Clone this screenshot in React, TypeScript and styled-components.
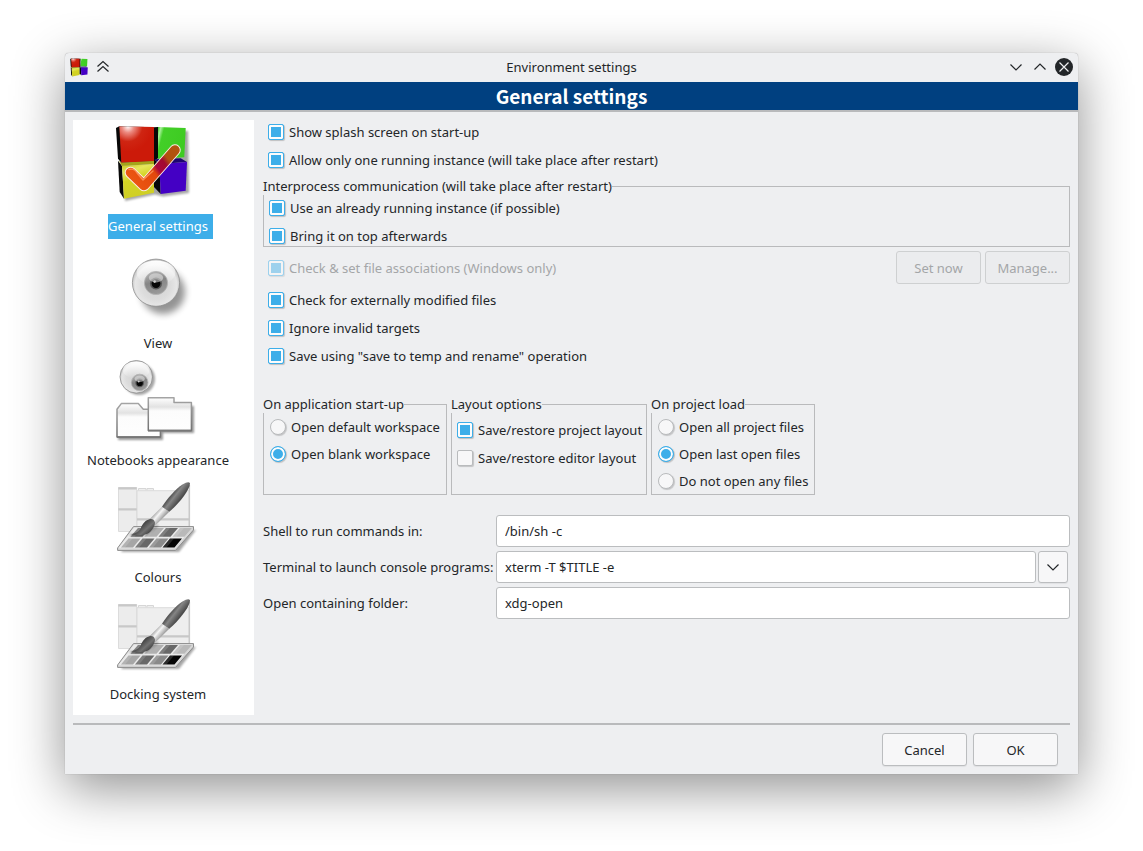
import React, { useState } from "react";
import styled, { createGlobalStyle } from "styled-components";

const GlobalStyle = createGlobalStyle`
  *, *::before, *::after { box-sizing: border-box; }
  body { margin: 0; background: #fff; }
  body, button, input {
    font-family: "Noto Sans", "Open Sans", sans-serif;
    font-size: 13px;
    line-height: 18px;
    color: #232629;
  }
`;

const Desktop = styled.main`
  padding: 53px 65px 76px;
`;

const Dialog = styled.section`
  background: #eeeff1;
  border-radius: 4px 4px 0 0;
  box-shadow: 0 0 1px rgba(0, 0, 0, 0.4), 0 14px 52px rgba(0, 0, 0, 0.44);
`;

const TitleBar = styled.header`
  display: grid;
  grid-template-columns: 1fr auto 1fr;
  align-items: center;
  height: 29px;
  padding: 0 5px 1px;
`;

const TitleTools = styled.div<{ $end?: boolean }>`
  display: flex;
  align-items: center;
  gap: 6px;
  justify-content: ${(p) => (p.$end ? "flex-end" : "flex-start")};
`;

const TitleButton = styled.button`
  display: flex;
  width: 18px;
  height: 18px;
  padding: 0;
  border: 0;
  background: none;
`;

const WindowTitle = styled.span`
  text-align: center;
`;

const Banner = styled.h1`
  height: 30px;
  margin: 0;
  background: #004080;
  border-bottom: 2px solid #b9babc;
  color: #fff;
  font-family: "Noto Sans CJK SC", "Noto Sans", sans-serif;
  font-size: 19px;
  font-weight: 700;
  line-height: 28px;
  text-align: center;
`;

const Body = styled.div`
  display: flex;
  gap: 9px;
  padding: 8px 8px 0;
`;

const Sidebar = styled.nav`
  flex: none;
  display: flex;
  flex-direction: column;
  width: 181px;
  padding: 2px 11px 8px 0;
  background: #fff;
`;

const PageButton = styled.button`
  display: flex;
  flex-direction: column;
  align-items: center;
  height: 117px;
  padding: 0;
  border: 0;
  background: none;
`;

const PageLabel = styled.span<{ $selected: boolean }>`
  padding: 0 5px 1px 0;
  margin-right: -5px;
  line-height: 24px;
  color: ${(p) => (p.$selected ? "#fff" : "#232629")};
  background: ${(p) => (p.$selected ? "#3daee9" : "none")};
`;

const Content = styled.div`
  flex: 1;
  min-width: 0;
  display: flex;
  flex-direction: column;
`;

const Stack = styled.div<{ $gap: number; $pad?: string }>`
  display: flex;
  flex-direction: column;
  gap: ${(p) => p.$gap}px;
  padding: ${(p) => p.$pad || "0"};
`;

const Option = styled.label<{ $disabled?: boolean }>`
  display: flex;
  align-items: center;
  gap: 5px;
  height: 20px;
  padding-left: 5px;
  white-space: nowrap;
  color: ${(p) => (p.$disabled ? "#a4a6a8" : "inherit")};
`;

const Mark = styled.input`
  appearance: none;
  flex: none;
  width: 16px;
  height: 16px;
  margin: 0;
  border: 1px solid #b9bbbd;
  border-radius: ${(p) => (p.type === "radio" ? "50%" : "2px")};
  background: #f7f7f8;
  box-shadow: 1px 1px 1px rgba(0, 0, 0, 0.18);

  &:checked {
    border-color: #3daee9;
    background: #3daee9;
    box-shadow: inset 0 0 0 2px #fcfcfc, 1px 1px 1px rgba(0, 0, 0, 0.2);
  }
  &:disabled {
    opacity: 0.45;
  }
`;

const AssociationRow = styled.div`
  display: flex;
  align-items: center;
  gap: 4px;
  margin: 4px 0 6px;

  label { flex: 1; }
`;

const PushButton = styled.button`
  width: 85px;
  height: 33px;
  padding: 0;
  border: 1px solid #bbbdbf;
  border-radius: 3px;
  background: #f7f7f8;
  box-shadow: 0 1px 1px rgba(0, 0, 0, 0.06);

  &:disabled {
    color: #a4a6a8;
    border-color: #ced0d1;
    background: #ebecee;
    box-shadow: none;
  }
`;

const Group = styled.fieldset<{ $width?: number }>`
  width: ${(p) => (p.$width ? `${p.$width}px` : "auto")};
  min-width: 0;
  margin: 0;
  padding: 0;
  border: 1px solid #b9babc;
`;

const Legend = styled.legend`
  height: 18px;
  margin-left: -1px;
  padding: 0;
  background: #eeeff1;
`;

const GroupRow = styled.div`
  display: flex;
  gap: 4px;
  margin-top: 29px;

  fieldset { height: 100px; }
`;

const Form = styled.div`
  display: grid;
  grid-template-columns: 229px 1fr;
  column-gap: 4px;
  row-gap: 4px;
  align-items: center;
  margin-top: 20px;
  white-space: nowrap;
`;

const TextField = styled.input`
  flex: 1;
  min-width: 0;
  width: 100%;
  height: 32px;
  padding: 0 8px;
  border: 1px solid #bbbdbf;
  border-radius: 3px;
  background: #fff;
`;

const Combo = styled.div`
  display: flex;
  gap: 2px;
  padding-right: 2px;
`;

const DropButton = styled(PushButton)`
  display: flex;
  align-items: center;
  justify-content: center;
  width: 30px;
  height: 32px;
`;

const Footer = styled.footer`
  display: flex;
  justify-content: flex-end;
  gap: 6px;
  margin: 8px 8px 0;
  padding: 8px 12px 8px 0;
  border-top: 2px solid #b9babc;
`;

const HiddenDefs = styled.svg`
  position: absolute;
  width: 0;
  height: 0;
`;

const SharedPaints = () => (
  <HiddenDefs aria-hidden="true">
    <defs>
      <radialGradient id="redFace" cx="0.25" cy="0" r="0.7">
        <stop offset="0" stopColor="#fff" />
        <stop offset="0.25" stopColor="#ec8a80" />
        <stop offset="0.6" stopColor="#cf2512" />
        <stop offset="1" stopColor="#cc1a09" />
      </radialGradient>
      <linearGradient id="greenFace" x1="0" y1="0" x2="1" y2="0.3">
        <stop offset="0" stopColor="#35c81e" />
        <stop offset="0.1" stopColor="#a8f09a" />
        <stop offset="0.22" stopColor="#43cf28" />
        <stop offset="1" stopColor="#3ecb22" />
      </linearGradient>
      <linearGradient id="yellowFace" x1="0" y1="0" x2="0.3" y2="1">
        <stop offset="0" stopColor="#c4c51c" />
        <stop offset="0.25" stopColor="#e6e65c" />
        <stop offset="0.5" stopColor="#d4d424" />
        <stop offset="1" stopColor="#cfcf26" />
      </linearGradient>
      <linearGradient id="tick" gradientUnits="userSpaceOnUse" x1="14" y1="64" x2="64" y2="26">
        <stop offset="0" stopColor="#ee5a14" />
        <stop offset="0.48" stopColor="#e2480c" />
        <stop offset="0.56" stopColor="#a8063c" />
        <stop offset="0.7" stopColor="#a30a30" />
        <stop offset="0.78" stopColor="#b2500f" />
        <stop offset="1" stopColor="#b2560f" />
      </linearGradient>
      <radialGradient id="ball" cx="0.5" cy="0.55" r="0.52">
        <stop offset="0" stopColor="#d2d2d2" />
        <stop offset="0.6" stopColor="#dcdcdc" />
        <stop offset="0.85" stopColor="#e6e6e6" />
        <stop offset="1" stopColor="#c2c2c2" />
      </radialGradient>
      <linearGradient id="shine" x1="0" y1="0" x2="0" y2="1">
        <stop offset="0" stopColor="#fff" />
        <stop offset="1" stopColor="#fff" stopOpacity="0" />
      </linearGradient>
      <linearGradient id="iris" x1="0.3" y1="0" x2="0.6" y2="1">
        <stop offset="0" stopColor="#b4b4b4" />
        <stop offset="0.45" stopColor="#858585" />
        <stop offset="1" stopColor="#9c9c9c" />
      </linearGradient>
      <linearGradient id="folder" x1="0" y1="0" x2="0" y2="1">
        <stop offset="0" stopColor="#fff" />
        <stop offset="0.28" stopColor="#e2e2e2" />
        <stop offset="0.4" stopColor="#fcfcfc" />
        <stop offset="1" stopColor="#fefefe" />
      </linearGradient>
      <linearGradient id="folderEdge" x1="0" y1="0" x2="0" y2="1">
        <stop offset="0" stopColor="#a4a4a4" />
        <stop offset="1" stopColor="#737373" />
      </linearGradient>
      <linearGradient id="handle" gradientUnits="userSpaceOnUse" x1="57" y1="21" x2="66" y2="28">
        <stop offset="0" stopColor="#3e3e3e" />
        <stop offset="0.45" stopColor="#858585" />
        <stop offset="1" stopColor="#4b4b4b" />
      </linearGradient>
      <linearGradient id="ferrule" gradientUnits="userSpaceOnUse" x1="42" y1="40" x2="49" y2="46">
        <stop offset="0" stopColor="#a8a8a8" />
        <stop offset="0.4" stopColor="#f6f6f6" />
        <stop offset="1" stopColor="#a0a0a0" />
      </linearGradient>
      <linearGradient id="bristle" gradientUnits="userSpaceOnUse" x1="30" y1="49" x2="40" y2="60">
        <stop offset="0" stopColor="#383838" />
        <stop offset="0.5" stopColor="#727272" />
        <stop offset="1" stopColor="#303030" />
      </linearGradient>
      <filter id="soft" x="-40%" y="-40%" width="180%" height="180%">
        <feGaussianBlur stdDeviation="3.5" />
      </filter>
      <filter id="softer" x="-40%" y="-40%" width="180%" height="180%">
        <feGaussianBlur stdDeviation="1.3" />
      </filter>
    </defs>
  </HiddenDefs>
);

const Cubes = () => (
  <>
    <path d="M3 6 6.3 4.3 41 5.3 45 5 45 36 41 39.3 8.3 40.7 5 36.7Z" fill="#080808" />
    <path d="M6.3 4.3 41 5 41 39.3 8.3 40.7Z" fill="url(#redFace)" />
    <path d="M45 5 72.7 6 71.3 35.3 45 36.7Z" fill="url(#greenFace)" />
    <path d="M5 38.7 9 44 11 76.7 6.7 70Z" fill="#080808" />
    <path d="M5.7 38.7 8.3 40.7 41 39 41 42 9 44Z" fill="#a4a51a" />
    <path d="M9 44 41 42 41 70.7 11 76.7Z" fill="url(#yellowFace)" />
    <path d="M41 37.3 67.7 36.3 74 40 46.3 42Z" fill="#1d0670" />
    <path d="M41 37.3 46.3 42 47.7 72 41 65Z" fill="#080808" />
    <path d="M46.3 42 74 40 72.7 68.7 47.7 72Z" fill="#4400c4" />
  </>
);

const Picture = ({ children }: { children: React.ReactNode }) => (
  <svg width="90" height="92" viewBox="0 0 90 92" aria-hidden="true">
    {children}
  </svg>
);

const GeneralIcon = () => (
  <Picture>
    <path d="M10 9 75 9 76 71 50 74.5 42 72.5 12 79Z" fill="#000" opacity="0.35" filter="url(#softer)" />
    <Cubes />
    <g fill="none" strokeLinecap="round" strokeLinejoin="round">
      <path d="M17.5 50.5 31 63.5 62 28" stroke="#fbeee6" strokeWidth="11.5" />
      <path d="M17.5 50.5 31 63.5 62 28" stroke="url(#tick)" strokeWidth="9.6" />
      <path d="M16 47.5Q21 46 24 51L30 58 40 49" stroke="#ff9a62" strokeWidth="1.4" opacity="0.8" />
    </g>
  </Picture>
);

type EyeProps = { cx: number; cy: number; r: number; ix: number; iy: number; ir: number };

const Eye = ({ cx, cy, r, ix, iy, ir }: EyeProps) => (
  <>
    <circle cx={cx} cy={cy} r={r} fill="url(#ball)" stroke="#8e8e8e" strokeWidth="0.8" />
    <ellipse cx={cx} cy={cy - r * 0.42} rx={r * 0.82} ry={r * 0.52} fill="url(#shine)" />
    <circle cx={ix} cy={iy} r={ir} fill="url(#iris)" stroke="#b3b3b3" strokeWidth="0.8" />
    <circle cx={ix} cy={iy + ir * 0.05} r={ir * 0.52} fill="#555" />
    <circle cx={ix} cy={iy + ir * 0.05} r={ir * 0.38} fill="#060606" />
    <ellipse cx={ix} cy={iy - ir * 0.45} rx={ir * 0.62} ry={ir * 0.4} fill="#e6e6e6" opacity="0.55" />
    <circle cx={ix - ir * 0.12} cy={iy - ir * 0.12} r={ir * 0.11} fill="#ccc" />
  </>
);

const ViewIcon = () => (
  <Picture>
    <circle cx="50" cy="53" r="22" fill="#000" opacity="0.42" filter="url(#soft)" />
    <Eye cx={43} cy={43.7} r={23.6} ix={43} iy={44} ir={11.6} />
  </Picture>
);

const NotebooksIcon = () => (
  <Picture>
    <circle cx="26" cy="23" r="16" fill="#000" opacity="0.35" filter="url(#softer)" />
    <Eye cx={23.3} cy={20.8} r={16.3} ix={26.7} iy={26.5} ir={8.3} />
    <path d="M5 84H50V77H81V50H60L40 55 6 58Z" fill="#000" opacity="0.4" filter="url(#softer)" />
    <path
      d="M4 53.3 8.3 47.6H25.3L30.3 53.3H47.4V81H4Z"
      fill="url(#folder)"
      stroke="url(#folderEdge)"
      strokeWidth="1.5"
      strokeLinejoin="round"
    />
    <path
      d="M35.3 41.7H61V46.6H78.4V74.6H35.3Z"
      fill="url(#folder)"
      stroke="url(#folderEdge)"
      strokeWidth="1.5"
      strokeLinejoin="round"
    />
    <path d="M4 81H47.5M35 74.6H78.5" stroke="#777" strokeWidth="1.6" />
  </Picture>
);

const swatches = [
  { x: 25, y: 55, fill: "#6f6f6f" },
  { x: 39, y: 55, fill: "#b0b0b0" },
  { x: 53, y: 55, fill: "#686868" },
  { x: 67, y: 55, fill: "#b9b9b9" },
  { x: 15.5, y: 65.6, fill: "#a6a6a6" },
  { x: 29.5, y: 65.6, fill: "#686868" },
  { x: 43.5, y: 65.6, fill: "#8a8a8a" },
  { x: 57, y: 65.6, fill: "#050505" },
];

const PaintIcon = () => (
  <Picture>
    <path d="M5.5 14.5H23.7V58.5H5.5Z" fill="#ececec" stroke="#dcdcdc" />
    <path d="M25.5 17.5V15.5H33V17.5M34 17.5V15.5H40.5V17.5" fill="#eee" stroke="#d6d6d6" />
    <path d="M24 17.7H76V54H24Z" fill="#eeeeee" stroke="#dadada" />
    <path d="M5.3 15.3H23.7M5.3 36.3H23.7M24 46.3H76" stroke="#c8c8c8" strokeWidth="2.2" />
    <path d="M76.4 12V53" stroke="#c9c9c9" strokeWidth="1.4" />
    <path d="M22 57H83L66 79H8Z" fill="#000" opacity="0.35" filter="url(#softer)" />
    <path
      d="M20.5 53.6H80.5V57L62.5 77.4H4.6V75Z"
      fill="#d6d6d6"
      stroke="#8c8c8c"
      strokeWidth="1"
      strokeLinejoin="round"
    />
    <path d="M21 54.4H79.4L62 75.2H5.4Z" fill="#eaeaea" />
    {swatches.map((s) => (
      <g key={`${s.x}-${s.y}`}>
        <path d={`M${s.x} ${s.y}h12l-7.5 8.8h-12Z`} fill={s.fill} />
        <path d={`M${s.x} ${s.y}h4l-7.5 8.8h-4Z`} fill="#fff" opacity="0.15" />
      </g>
    ))}
    <path d="M17 62Q25 63 33 61.5L45 52" fill="none" stroke="#000" strokeWidth="2" opacity="0.3" filter="url(#softer)" />
    <path d="M35.7 47 49 33.7 56.3 38.7 41.7 53Z" fill="url(#ferrule)" />
    <path
      d="M18 61.3Q25 60 27.7 55.5C29.5 50 33 47 36.5 46.2Q41 45.5 42 49.5C42 54 37.5 60.5 32 61.6Q24.5 63 18 61.3Z"
      fill="url(#bristle)"
    />
    <path d="M49 33.7C54 26 63 15.5 69.5 11.5Q75.5 8 77 10.2C77 17 65 31.5 56.3 38.7Q53 36.5 49 33.7Z" fill="url(#handle)" />
  </Picture>
);

const Chevron = ({ up }: { up?: boolean }) => (
  <svg width="18" height="18" viewBox="0 0 18 18" fill="none" stroke="#232629" strokeWidth="1.2" aria-hidden="true">
    <path d={up ? "M3.5 11.5 9 6 14.5 11.5" : "M3.5 6.5 9 12 14.5 6.5"} />
  </svg>
);

const pages = [
  { name: "General settings", icon: <GeneralIcon /> },
  { name: "View", icon: <ViewIcon /> },
  { name: "Notebooks appearance", icon: <NotebooksIcon /> },
  { name: "Colours", icon: <PaintIcon /> },
  { name: "Docking system", icon: <PaintIcon /> },
];

type ChoiceProps = { label: string; on?: boolean; disabled?: boolean; group?: string };

const Choice = ({ label, on, disabled, group }: ChoiceProps) => (
  <Option $disabled={disabled}>
    <Mark type={group ? "radio" : "checkbox"} name={group} defaultChecked={on} disabled={disabled} />
    {label}
  </Option>
);

export default function App() {
  const [page, setPage] = useState(pages[0].name);

  return (
    <Desktop>
      <GlobalStyle />
      <SharedPaints />
      <Dialog role="dialog" aria-label="Environment settings">
        <TitleBar>
          <TitleTools>
            <svg width="18" height="19" viewBox="2 3 73 75" aria-hidden="true">
              <Cubes />
            </svg>
            <TitleButton aria-label="Keep above">
              <svg width="18" height="18" viewBox="0 0 18 18" fill="none" stroke="#232629" strokeWidth="1.2">
                <path d="M3.5 8.5 9 3.5 14.5 8.5M3.5 13.5 9 8.5 14.5 13.5" />
              </svg>
            </TitleButton>
          </TitleTools>
          <WindowTitle>Environment settings</WindowTitle>
          <TitleTools $end>
            <TitleButton aria-label="Minimise">
              <Chevron />
            </TitleButton>
            <TitleButton aria-label="Maximise">
              <Chevron up />
            </TitleButton>
            <TitleButton aria-label="Close">
              <svg width="18" height="18" viewBox="0 0 18 18">
                <circle cx="9" cy="9" r="9" fill="#232629" />
                <path d="M4.5 4.5 13.5 13.5M13.5 4.5 4.5 13.5" stroke="#eeeff1" strokeWidth="1.2" />
              </svg>
            </TitleButton>
          </TitleTools>
        </TitleBar>

        <Banner>General settings</Banner>

        <Body>
          <Sidebar aria-label="Settings pages">
            {pages.map((p) => (
              <PageButton key={p.name} aria-pressed={p.name === page} onClick={() => setPage(p.name)}>
                {p.icon}
                <PageLabel $selected={p.name === page}>{p.name}</PageLabel>
              </PageButton>
            ))}
          </Sidebar>

          <Content>
            <Stack $gap={8} $pad="2px 0 7px">
              <Choice label="Show splash screen on start-up" on />
              <Choice label="Allow only one running instance (will take place after restart)" on />
            </Stack>

            <Group>
              <Legend>Interprocess communication (will take place after restart)</Legend>
              <Stack $gap={8} $pad="3px 0 0">
                <Choice label="Use an already running instance (if possible)" on />
                <Choice label="Bring it on top afterwards" on />
              </Stack>
            </Group>

            <AssociationRow>
              <Choice label="Check & set file associations (Windows only)" on disabled />
              <PushButton disabled>Set now</PushButton>
              <PushButton disabled>Manage...</PushButton>
            </AssociationRow>

            <Stack $gap={8}>
              <Choice label="Check for externally modified files" on />
              <Choice label="Ignore invalid targets" on />
              <Choice label={'Save using "save to temp and rename" operation'} on />
            </Stack>

            <GroupRow>
              <Group $width={184}>
                <Legend>On application start-up</Legend>
                <Stack $gap={7} $pad="4px 0 0 1px">
                  <Choice group="startup" label="Open default workspace" />
                  <Choice group="startup" label="Open blank workspace" on />
                </Stack>
              </Group>
              <Group $width={196}>
                <Legend>Layout options</Legend>
                <Stack $gap={8} $pad="7px 0 0">
                  <Choice label="Save/restore project layout" on />
                  <Choice label="Save/restore editor layout" />
                </Stack>
              </Group>
              <Group $width={164}>
                <Legend>On project load</Legend>
                <Stack $gap={7} $pad="4px 0 0 1px">
                  <Choice group="project" label="Open all project files" />
                  <Choice group="project" label="Open last open files" on />
                  <Choice group="project" label="Do not open any files" />
                </Stack>
              </Group>
            </GroupRow>

            <Form>
              <label htmlFor="shell">Shell to run commands in:</label>
              <TextField id="shell" defaultValue="/bin/sh -c" />
              <label htmlFor="terminal">Terminal to launch console programs:</label>
              <Combo>
                <TextField id="terminal" defaultValue="xterm -T $TITLE -e" />
                <DropButton aria-label="Show terminals">
                  <Chevron />
                </DropButton>
              </Combo>
              <label htmlFor="folder-cmd">Open containing folder:</label>
              <TextField id="folder-cmd" defaultValue="xdg-open" />
            </Form>
          </Content>
        </Body>

        <Footer>
          <PushButton>Cancel</PushButton>
          <PushButton>OK</PushButton>
        </Footer>
      </Dialog>
    </Desktop>
  );
}
